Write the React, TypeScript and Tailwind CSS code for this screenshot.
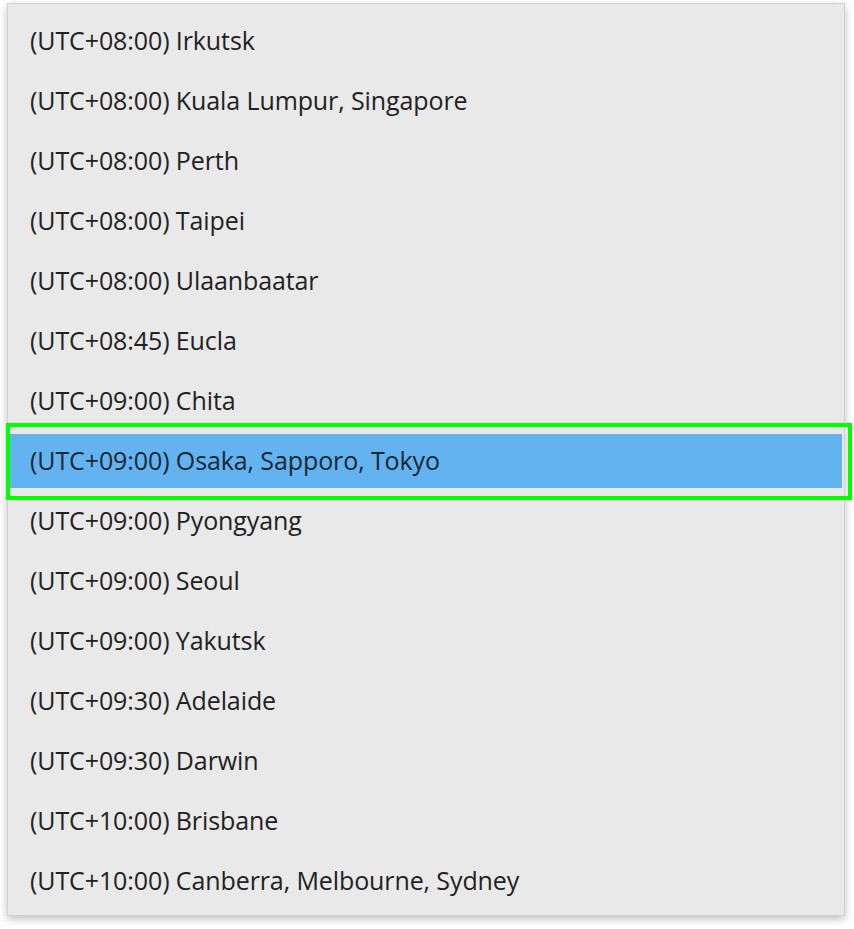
const zones = [
  "(UTC+08:00) Irkutsk",
  "(UTC+08:00) Kuala Lumpur, Singapore",
  "(UTC+08:00) Perth",
  "(UTC+08:00) Taipei",
  "(UTC+08:00) Ulaanbaatar",
  "(UTC+08:45) Eucla",
  "(UTC+09:00) Chita",
  "(UTC+09:00) Osaka, Sapporo, Tokyo",
  "(UTC+09:00) Pyongyang",
  "(UTC+09:00) Seoul",
  "(UTC+09:00) Yakutsk",
  "(UTC+09:30) Adelaide",
  "(UTC+09:30) Darwin",
  "(UTC+10:00) Brisbane",
  "(UTC+10:00) Canberra, Melbourne, Sydney",
];

const selected = 7;

export default function App() {
  return (
    <div className="relative w-[854px] h-[929px] overflow-hidden bg-white font-['Open_Sans',sans-serif]">
      <div className="ml-[7px] mt-[3px] w-[838px] h-[913px] pt-[7px] bg-[#e9e9e9] border border-[#d2d2d2] shadow-[0_3px_8px_rgba(0,0,0,0.25)]">
        {zones.map((z, i) => (
          <div key={z} className="h-[60px] px-[2px] py-[3px]">
            <div
              className={`h-full flex items-center pl-[20px] text-[25px] tracking-[-0.1px] ${
                i === selected ? "bg-[#63b3f1] text-[#1b2733]" : "text-[#222222]"
              }`}
            >
              {z}
            </div>
          </div>
        ))}
      </div>
      {/* highlight annotation */}
      <div className="absolute left-[6px] top-[423px] w-[846px] h-[77px] border-4 border-[#00ff00]" />
    </div>
  );
}
